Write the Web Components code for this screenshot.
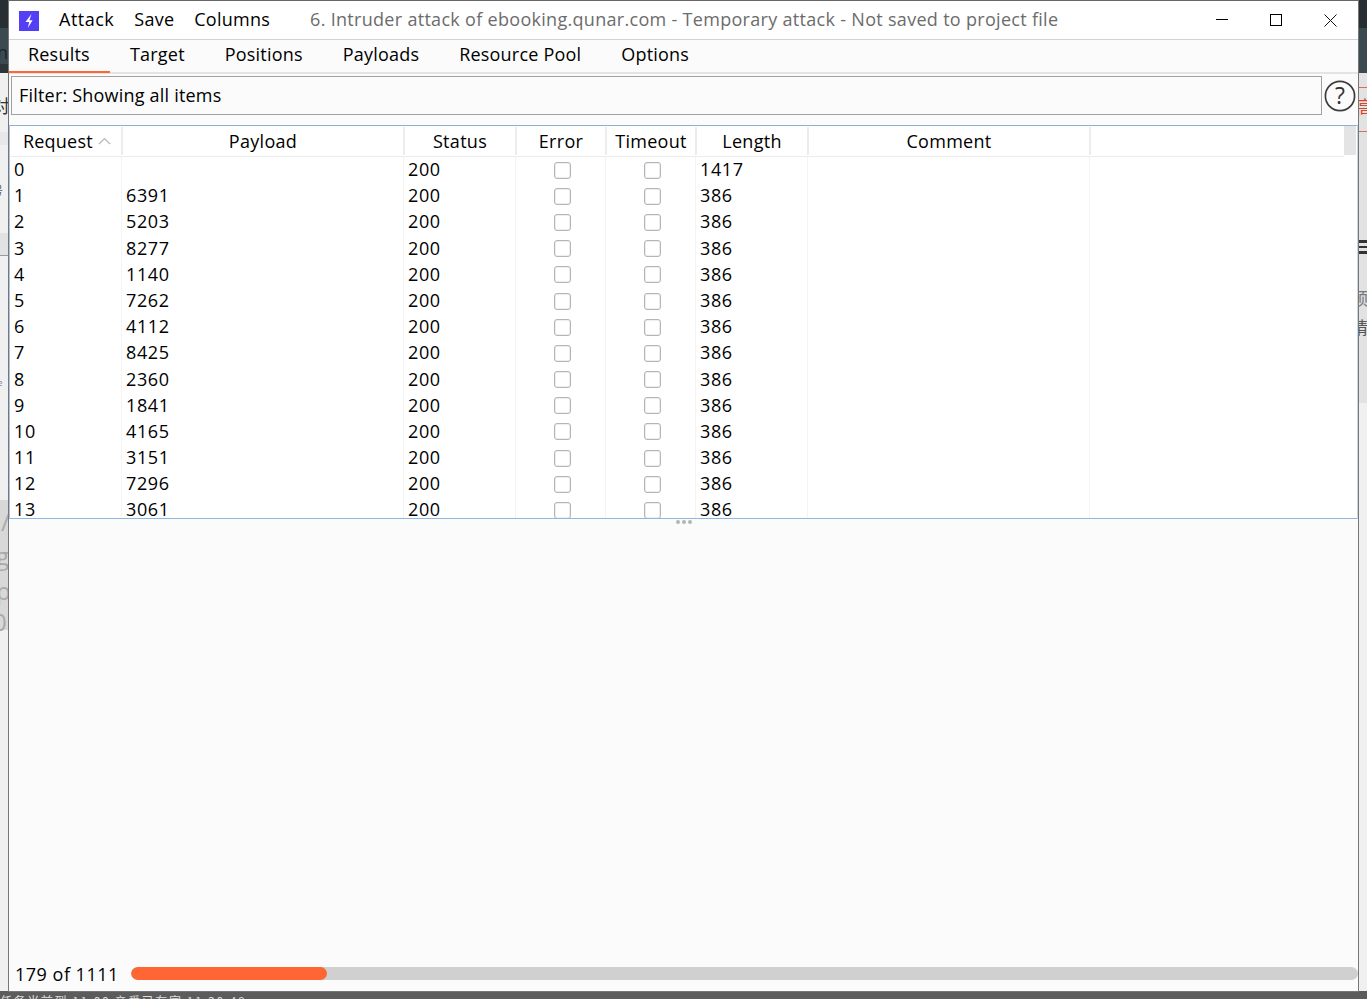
<!DOCTYPE html>
<html>
<head>
<meta charset="utf-8">
<title>Intruder attack</title>
<style>
  html, body { margin: 0; height: 100%; }
  body { width: 1367px; height: 999px; overflow: hidden; background: #e4e4e4; font-family: "Open Sans", "Liberation Sans", sans-serif; }
</style>
</head>
<body>
<desktop-backdrop>
  <attack-window>
    <window-titlebar title-text="6. Intruder attack of ebooking.qunar.com - Temporary attack - Not saved to project file"></window-titlebar>
    <tab-strip></tab-strip>
    <filter-bar></filter-bar>
    <results-table></results-table>
    <detail-pane></detail-pane>
    <progress-footer done="179" total="1111"></progress-footer>
  </attack-window>
</desktop-backdrop>

<script>
// page behind the window, only thin strips show on both sides
class DesktopBackdrop extends HTMLElement {
  constructor() {
    super();
    const root = this.attachShadow({ mode: 'open' });
    root.innerHTML = `
      <style>
        :host { display: block; position: relative; width: 1367px; height: 999px; overflow: hidden; background: #f0f0f0; }
        .frag { position: absolute; color: #333; font-family: "Noto Sans CJK SC", sans-serif; white-space: nowrap; }
        .latin { font-family: "Open Sans", sans-serif; font-size: 24px; color: #aaa; line-height: 30px; }
        .bar { position: absolute; }
        .win { position: absolute; left: 9px; top: 0; z-index: 2; }
      </style>
      <div class="bar" style="left:0;top:0;width:9px;height:28px;background:#272f33"></div>
      <div class="bar" style="left:0;top:28px;width:9px;height:36px;background:#3b4a50"></div>
      <div class="bar" style="left:0;top:64px;width:9px;height:9px;background:#2d3539"></div>
      <div class="bar" style="left:0;top:132px;width:9px;height:13px;background:#e8e8e8"></div>
      <div class="bar" style="left:0;top:233px;width:9px;height:22px;background:#e2e2e2"></div>
      <div class="bar" style="left:0;top:255px;width:9px;height:1px;background:#999"></div>
      <div class="bar" style="left:0;top:500px;width:9px;height:130px;background:#d8d8d8"></div>
      <div class="bar" style="left:1358px;top:0;width:9px;height:28px;background:#272f33"></div>
      <div class="bar" style="left:1358px;top:28px;width:9px;height:45px;background:#3b4a50"></div>
      <div class="bar" style="left:1358px;top:73px;width:9px;height:330px;background:#e2e2e2"></div>
      <div class="bar" style="left:1358px;top:87px;width:9px;height:1px;background:#e06a50"></div>
      <div class="bar" style="left:1358px;top:131px;width:9px;height:1px;background:#e06a50"></div>
      <div class="bar" style="left:0;top:991px;width:1367px;height:8px;background:#5c5c5c"></div>
      <span class="frag" style="left:-3px;top:40px;font-size:18px;font-family:'Open Sans',sans-serif;color:#222">n</span>
      <span class="frag" style="left:-8px;top:92px;font-size:18px;">对</span>
      <span class="frag" style="left:-8px;top:182px;font-size:11px;color:#555">号</span>
      <span class="frag" style="left:-8px;top:376px;font-size:9px;color:#888">pe</span>
      <span class="frag" style="left:1356px;top:93px;font-size:18px;color:#d9432c">高</span>
      <span class="frag" style="left:1351px;top:285px;font-size:17px;color:#777">预</span>
      <span class="frag" style="left:1351px;top:314px;font-size:17px;color:#555">睛</span>
      <span class="frag latin" style="left:1px;top:507px;">/</span>
      <span class="frag latin" style="left:-4px;top:541px;">g</span>
      <span class="frag latin" style="left:-4px;top:576px;">p</span>
      <span class="frag latin" style="left:-7px;top:607px;">0</span>
      <div class="bar" style="left:1358px;top:240px;width:9px;height:3px;background:#333"></div>
      <div class="bar" style="left:1358px;top:246px;width:9px;height:2px;background:#333"></div>
      <div class="bar" style="left:1358px;top:251px;width:9px;height:3px;background:#333"></div>
      <span class="frag" style="left:0;top:994px;font-size:12px;color:#ddd;letter-spacing:1.6px;line-height:14px">任务当前到 11:00 亲爱已在家 11:20:48</span>
      <div class="win"><slot></slot></div>`;
  }
}

class AttackWindow extends HTMLElement {
  constructor() {
    super();
    const root = this.attachShadow({ mode: 'open' });
    root.innerHTML = `
      <style>
        :host { display: flex; flex-direction: column; box-sizing: border-box; width: 1349px; height: 991px;
                background: #fbfbfb; color: #000; border-top: 1px solid #666; box-shadow: 0 0 0 1px #777;
                font-family: "Open Sans", "Liberation Sans", sans-serif; }
      </style>
      <slot></slot>`;
  }
}

class WindowTitlebar extends HTMLElement {
  constructor() {
    super();
    const root = this.attachShadow({ mode: 'open' });
    const title = this.getAttribute('title-text');
    root.innerHTML = `
      <style>
        :host { display: flex; align-items: center; position: relative; height: 38px; flex: none; background: #fff; border-bottom: 1px solid #d2d2d2; font-size: 18px; }
        .logo { width: 20px; height: 20px; margin: 1px 0 0 10px; flex: none; }
        nav { display: flex; gap: 20px; margin: -2px 0 0 20px; letter-spacing: .25px; }
        nav span:first-child { letter-spacing: .5px; }
        .title { margin: -2px 0 0 40px; color: #6c6c6c; white-space: nowrap; letter-spacing: .3px; }
        .ctl { position: absolute; top: 0; width: 55px; height: 38px; display: flex; align-items: center; justify-content: center; }
        svg { display: block; }
      </style>
      <svg class="logo" viewBox="0 0 20 20">
        <rect width="20" height="20" fill="#5340f5"/>
        <path d="M12.5 3 L6.5 11 H10.2 L8.8 17 L13.6 9.3 H10.4 Z" fill="#fff"/>
      </svg>
      <nav><span>Attack</span><span>Save</span><span>Columns</span></nav>
      <span class="title">${title}</span>
      <div class="ctl" style="left:1185px"><svg width="12" height="2"><rect width="12" height="1" fill="#000"/></svg></div>
      <div class="ctl" style="left:1239px"><svg width="12" height="12"><rect x=".5" y=".5" width="11" height="11" fill="none" stroke="#000"/></svg></div>
      <div class="ctl" style="left:1294px"><svg width="13" height="13"><path d="M.5 .5 L12.5 12.5 M12.5 .5 L.5 12.5" stroke="#111" stroke-width="1" fill="none"/></svg></div>`;
  }
}

class TabStrip extends HTMLElement {
  constructor() {
    super();
    const root = this.attachShadow({ mode: 'open' });
    const tabs = ['Results', 'Target', 'Positions', 'Payloads', 'Resource Pool', 'Options'];
    root.innerHTML = `
      <style>
        :host { display: flex; height: 34px; flex: none; box-sizing: border-box; background: #fbfbfb; border-bottom: 2px solid #e4e4e4; font-size: 18px; }
        .tab { padding: 0 20px; height: 33px; box-sizing: border-box; line-height: 29px; letter-spacing: .2px; white-space: nowrap; }
        .tab.on { padding: 0 20px 0 19px; border-bottom: 2px solid #ff6633; width: 101px; }
      </style>
      ${tabs.map((t, i) => `<div class="tab ${i === 0 ? 'on' : ''}">${t}</div>`).join('')}`;
  }
}

class FilterBar extends HTMLElement {
  constructor() {
    super();
    const root = this.attachShadow({ mode: 'open' });
    root.innerHTML = `
      <style>
        :host { display: flex; align-items: flex-start; height: 51px; flex: none; box-sizing: border-box; padding: 2px 2px 0; gap: 2px; background: #fbfbfb; font-size: 18px; }
        .box { flex: 1; box-sizing: border-box; height: 39px; border: 1px solid #a0a0a0; padding-left: 7px; line-height: 36px; letter-spacing: .2px; }
        svg { flex: none; display: block; margin-top: 4px; }
        text { font-family: "Open Sans", sans-serif; font-size: 23px; fill: #333; }
      </style>
      <div class="box">Filter: Showing all items</div>
      <svg width="32" height="32" viewBox="0 0 32 32">
        <circle cx="16" cy="16" r="14.6" fill="none" stroke="#3c3c3c" stroke-width="1.7"/>
        <text x="16" y="24" text-anchor="middle">?</text>
      </svg>`;
  }
}

class ResultsTable extends HTMLElement {
  constructor() {
    super();
    const root = this.attachShadow({ mode: 'open' });
    const rows = [
      [0, '', 1417], [1, 6391, 386], [2, 5203, 386], [3, 8277, 386], [4, 1140, 386],
      [5, 7262, 386], [6, 4112, 386], [7, 8425, 386], [8, 2360, 386], [9, 1841, 386],
      [10, 4165, 386], [11, 3151, 386], [12, 7296, 386], [13, 3061, 386]
    ];
    const cols = '112px 282px 112px 90px 90px 112px 282px 1fr';
    root.innerHTML = `
      <style>
        :host { display: block; position: relative; height: 394px; flex: none; box-sizing: border-box; overflow: hidden;
                background: #fff; border-top: 1px solid #8fb0d6; border-bottom: 1px solid #8fb8e0; border-right: 1px solid #c4d6ea; border-left: 1px solid #a9c3e2; font-size: 18px; }
        .head, .row { display: grid; grid-template-columns: ${cols}; }
        .head { height: 31px; box-sizing: border-box; border-bottom: 1px solid #ececec; margin-right: 13px; }
        .head div { text-align: center; line-height: 28px; border-right: 1px solid #ececec; box-shadow: 1px 0 0 #ececec; margin-top: 1px; height: 28px; padding-left: 1px; box-sizing: border-box; letter-spacing: .3px; white-space: nowrap; }
        .head div:last-child { border: 0; box-shadow: none; }
        .head .sort { text-align: left; padding-left: 13px; letter-spacing: .2px; }
        .sort svg { margin-left: 5px; vertical-align: 3px; }
        .row { height: 26.2px; }
        .row > div { border-right: 1px solid #f4f4f4; padding-left: 4px; line-height: 25.6px; letter-spacing: .6px; min-width: 0; box-sizing: border-box; }
        .row > div:last-child { border: 0; }
        .row .c { display: flex; align-items: center; justify-content: center; padding: 0 0 0 4px; }
        .check { width: 17px; height: 17px; box-sizing: border-box; border: 1px solid #b5b5b5; border-radius: 3px; background: #fff; box-shadow: inset 0 0 0 .5px #ddd; }
        .thumb { position: absolute; top: 0; right: 1px; width: 12px; height: 29px; background: #e4e4e4; }
      </style>
      <div class="head">
        <div class="sort">Request<svg width="13" height="8" viewBox="0 0 13 8"><path d="M1 7 L6.5 1.5 L12 7" fill="none" stroke="#b8b8b8" stroke-width="1.2"/></svg></div>
        <div>Payload</div><div>Status</div><div>Error</div><div>Timeout</div><div>Length</div><div>Comment</div><div></div>
      </div>
      ${rows.map(r => `<div class="row">
        <div>${r[0]}</div><div>${r[1]}</div><div>200</div>
        <div class="c"><span class="check"></span></div><div class="c"><span class="check"></span></div>
        <div>${r[2]}</div><div></div><div></div></div>`).join('')}
      <div class="thumb"></div>`;
  }
}

class DetailPane extends HTMLElement {
  constructor() {
    super();
    const root = this.attachShadow({ mode: 'open' });
    root.innerHTML = `
      <style>
        :host { display: block; flex: 1; position: relative; background: #fbfbfb; }
        .grip { position: absolute; left: 667px; top: 1px; display: flex; gap: 2px; }
        .grip i { width: 4px; height: 4px; border-radius: 50%; background: #b5b5b5; }
      </style>
      <div class="grip"><i></i><i></i><i></i></div>`;
  }
}

class ProgressFooter extends HTMLElement {
  constructor() {
    super();
    const root = this.attachShadow({ mode: 'open' });
    const done = +this.getAttribute('done');
    const total = +this.getAttribute('total');
    root.innerHTML = `
      <style>
        :host { display: flex; align-items: center; height: 36px; flex: none; box-sizing: border-box; padding: 1px 0 0 6px; gap: 12px; background: #fbfbfb; font-size: 18px; }
        .label { white-space: nowrap; letter-spacing: .5px; }
        .track { flex: 1; height: 13px; border-radius: 7px; background: #d0d0d0; overflow: hidden; }
        .fill { height: 100%; width: ${(done / total * 100).toFixed(0)}%; border-radius: 7px; background: #ff6633; }
      </style>
      <span class="label">${done} of ${total}</span>
      <div class="track"><div class="fill"></div></div>`;
  }
}

customElements.define('desktop-backdrop', DesktopBackdrop);
customElements.define('attack-window', AttackWindow);
customElements.define('window-titlebar', WindowTitlebar);
customElements.define('tab-strip', TabStrip);
customElements.define('filter-bar', FilterBar);
customElements.define('results-table', ResultsTable);
customElements.define('detail-pane', DetailPane);
customElements.define('progress-footer', ProgressFooter);
</script>
</body>
</html>
